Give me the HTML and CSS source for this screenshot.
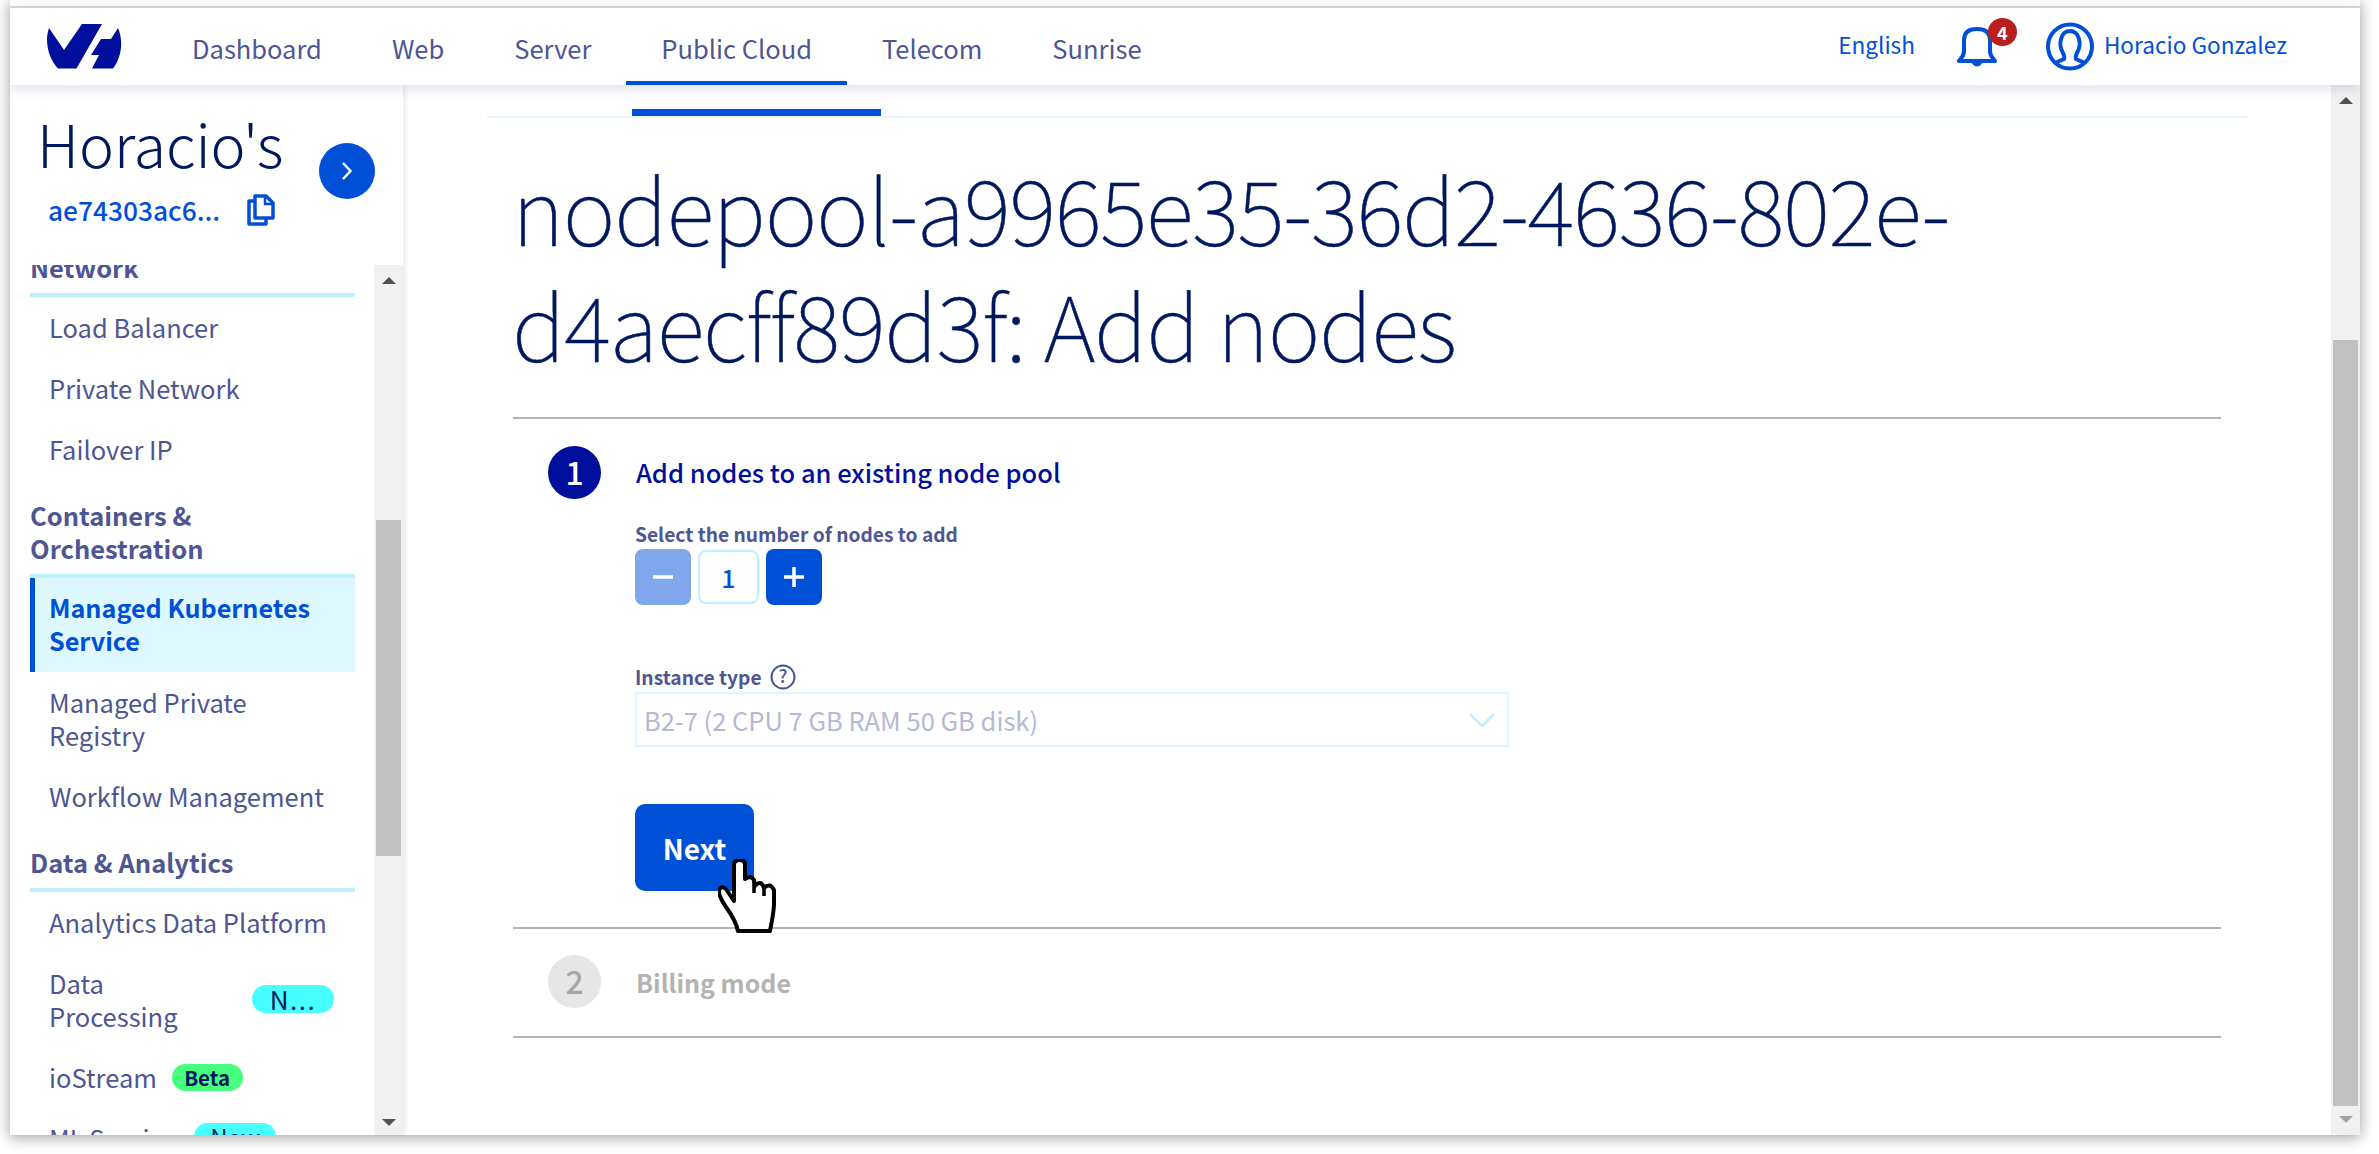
FILE: index.html
```html
<!DOCTYPE html>
<html lang="en">
<head>
    <meta charset="UTF-8">
    <meta name="viewport" content="width=device-width, initial-scale=1.0">
    <link rel="stylesheet" href="styles.css">
    <title>Add nodes</title>
</head>
<body>

<div id="window">
    <div class="top-strip"></div>

    <header class="topbar">
        <svg class="logo" viewBox="0 0 76 45">
            <path d="M3 4C-2 18 3 35 12 44.500L30.500 44.500L56 0L36 0L18 26Z"/>
            <path d="M72 4C78 18 75 34 67 44.500L46 44.500L53 31L45 31L55 15L65 15Z"/>
        </svg>
        <nav class="nav">
            <a class="nav-link">Dashboard</a>
            <a class="nav-link">Web</a>
            <a class="nav-link">Server</a>
            <a class="nav-link active">Public Cloud</a>
            <a class="nav-link">Telecom</a>
            <a class="nav-link">Sunrise</a>
        </nav>
        <div class="topbar-right">
            <span class="lang">English</span>
            <span class="bell">
                <svg viewBox="0 0 40 41" width="40" height="41">
                    <path d="M2 35H38L35 31Q33 29 33 24V14Q33 3 20 3Q7 3 7 14V24Q7 29 5 31Z" fill="none" stroke="#0050d7" stroke-width="4" stroke-linejoin="round"/>
                    <path d="M14 36Q20 45 26 36Z" fill="#0050d7"/>
                </svg>
                <span class="bell-count">4</span>
            </span>
            <svg class="user-icon" viewBox="0 0 48 49" width="48" height="49">
                <circle cx="24" cy="24.500" r="22" fill="none" stroke="#0050d7" stroke-width="4"/>
                <path d="M9 41L18 37Q19 35 17 31Q13 24 15 17Q17 9 24 9Q31 9 33 17Q35 24 31 31Q29 35 30 37L39 41" fill="none" stroke="#0050d7" stroke-width="4"/>
            </svg>
            <span class="user-name">Horacio Gonzalez</span>
        </div>
    </header>

    <div class="body-row">
        <aside class="sidebar">
            <div class="sidebar-head">
                <div>
                    <div class="project-name">Horacio's</div>
                    <div class="project-id">
                        <span>ae74303ac6...</span>
                        <svg viewBox="0 0 29 32" width="29" height="32">
                            <path d="M9 2H20L27 9V24H9Z" fill="none" stroke="#0050d7" stroke-width="3.500" stroke-linejoin="round"/>
                            <path d="M19 3V10H26" fill="none" stroke="#0050d7" stroke-width="2.500"/>
                            <path d="M9 7H3V30H20V24" fill="none" stroke="#0050d7" stroke-width="3.500" stroke-linejoin="round"/>
                        </svg>
                    </div>
                </div>
                <div class="collapse-btn">
                    <svg viewBox="0 0 12 20" width="12" height="20">
                        <path d="M2 2L9.500 10L2 18" fill="none" stroke="#fff" stroke-width="2.500"/>
                    </svg>
                </div>
            </div>

            <div class="sidebar-body">
                <div class="menu-clip">
                    <div class="menu">
                        <div class="menu-group">Network</div>
                        <a class="menu-item">Load Balancer</a>
                        <a class="menu-item">Private Network</a>
                        <a class="menu-item">Failover IP</a>

                        <div class="menu-group">Containers &amp; Orchestration</div>
                        <a class="menu-item selected">Managed Kubernetes Service</a>
                        <a class="menu-item">Managed Private Registry</a>
                        <a class="menu-item">Workflow Management</a>

                        <div class="menu-group">Data &amp; Analytics</div>
                        <a class="menu-item">Analytics Data Platform</a>
                        <a class="menu-item item-badge">
                            <span class="item-label">Data Processing</span>
                            <span class="badge badge-new badge-cut">N...</span>
                        </a>
                        <a class="menu-item item-inline">ioStream <span class="badge badge-beta">Beta</span></a>
                        <a class="menu-item item-inline">ML Serving <span class="badge badge-new badge-ml">New</span></a>
                    </div>
                </div>
                <div class="scrollbar side-scroll">
                    <div class="arrow-up"></div>
                    <div class="thumb"></div>
                    <div class="arrow-down"></div>
                </div>
            </div>
        </aside>

        <main class="main">
            <div class="tabs-line"><div class="tab-mark"></div></div>

            <h1 class="title">nodepool-a9965e35-36d2-4636-802e-<br>d4aecff89d3f: Add nodes</h1>

            <section class="step step-one">
                <div class="step-head">
                    <div class="step-num">1</div>
                    <div class="step-title">Add nodes to an existing node pool</div>
                </div>
                <div class="step-body">
                    <label class="field-label">Select the number of nodes to add</label>
                    <div class="stepper">
                        <div class="step-btn disabled">
                            <svg viewBox="0 0 20 20" width="20" height="20"><path d="M0 10H20" stroke="#fff" stroke-width="3.500"/></svg>
                        </div>
                        <div class="step-value">1</div>
                        <div class="step-btn">
                            <svg viewBox="0 0 20 20" width="20" height="20"><path d="M0 10H20M10 0V20" stroke="#fff" stroke-width="3.500"/></svg>
                        </div>
                    </div>

                    <label class="field-label instance-label">
                        Instance type
                        <svg viewBox="0 0 26 26" width="26" height="26">
                            <circle cx="13" cy="13" r="11.500" fill="none" stroke="#4d5693" stroke-width="2"/>
                            <text x="13" y="19" text-anchor="middle" class="help-mark">?</text>
                        </svg>
                    </label>
                    <div class="select-box">
                        <span>B2-7 (2 CPU 7 GB RAM 50 GB disk)</span>
                        <svg viewBox="0 0 28 16" width="28" height="16">
                            <path d="M2 2L14 14L26 2" fill="none" stroke="#bef1ff" stroke-width="2.500"/>
                        </svg>
                    </div>

                    <button class="next-btn">Next</button>
                </div>
            </section>

            <section class="step step-two">
                <div class="step-head">
                    <div class="step-num">2</div>
                    <div class="step-title">Billing mode</div>
                </div>
            </section>

            <svg class="hand" viewBox="0 0 58 74" width="58" height="74">
                <path d="M16 36V6Q16 1 21.500 1Q27 1 27 6V20Q33 16 36 21L37 27Q43 20 46 29Q52 23 56 31V45Q56 52 52 72H20Q18 62 8 48Q0 36 1 31Q3 26 8 30L16 42Z" fill="#fff" stroke="#000" stroke-width="4" stroke-linejoin="round"/>
                <path d="M36 21V34M46 29V37" fill="none" stroke="#000" stroke-width="3.500"/>
            </svg>
        </main>

        <div class="scrollbar page-scroll">
            <div class="arrow-up"></div>
            <div class="thumb"></div>
            <div class="arrow-down light"></div>
        </div>
    </div>
</div>

</body>
</html>
```

FILE: styles.css
```css
* {
    box-sizing: border-box;
}

body {
    margin: 0;
    height: 1154px;
    overflow: hidden;
    background-color: #fff;
    font-family: "Noto Sans CJK JP", "Noto Sans", sans-serif;
    color: #4d5693;
}

#window {
    display: flex;
    flex-direction: column;
    width: 2350px;
    height: 1135px;
    margin-left: 10px;
    background-color: #fff;
    box-shadow: 0 2px 14px rgba(0, 0, 0, 0.4);
    overflow: hidden;
}

.top-strip {
    flex: none;
    height: 8px;
    border-bottom: 2px solid #dcdce2;
}

/* top bar */
.topbar {
    position: relative;
    z-index: 2;
    flex: none;
    display: flex;
    align-items: stretch;
    height: 77px;
    background-color: #fff;
    box-shadow: 0 2px 12px rgba(40, 40, 110, 0.18);
}

.logo {
    flex: none;
    width: 76px;
    height: 45px;
    margin: 16px 0 0 36px;
    fill: #000e9c;
}

.nav {
    display: flex;
    margin-left: 35px;
}

.nav-link {
    display: flex;
    align-items: center;
    padding: 5px 35px 0;
    font-size: 25.500px;
    border-bottom: 4px solid transparent;
}

.nav-link.active {
    border-bottom-color: #0050d7;
}

.topbar-right {
    display: flex;
    align-items: center;
    margin-left: auto;
    padding-right: 73px;
    color: #0050d7;
    font-size: 22.600px;
}

.lang {
    margin: 0 42px 5px 0;
}

.bell {
    position: relative;
    display: flex;
    margin-right: 49px;
}

.bell-count {
    position: absolute;
    top: -8px;
    left: 31px;
    width: 29px;
    height: 28px;
    border-radius: 50%;
    background-color: #bb1e1e;
    color: #fff;
    font-size: 18px;
    font-weight: 700;
    line-height: 28px;
    text-align: center;
}

.user-name {
    margin: 0 0 5px 10px;
}

/* sidebar */
.body-row {
    flex: 1;
    display: flex;
    min-height: 0;
}

.sidebar {
    position: relative;
    z-index: 1;
    flex: none;
    display: flex;
    flex-direction: column;
    width: 393px;
    background-color: #fff;
    box-shadow: 1px 0 6px rgba(40, 40, 110, 0.15);
}

.sidebar-head {
    flex: none;
    display: flex;
    align-items: flex-start;
    justify-content: space-between;
    height: 180px;
    padding: 22px 28px 0 27px;
}

.project-name {
    margin-bottom: 13px;
    color: #00185e;
    font-size: 59px;
    font-weight: 300;
    line-height: 72px;
}

.project-id {
    display: flex;
    align-items: center;
    gap: 26px;
    padding-left: 11px;
    color: #0050d7;
    font-size: 26.300px;
    font-weight: 500;
    line-height: 36px;
}

.collapse-btn {
    display: flex;
    align-items: center;
    justify-content: center;
    width: 56px;
    height: 56px;
    margin-top: 36px;
    border-radius: 50%;
    background-color: #0050d7;
}

.sidebar-body {
    flex: 1;
    display: flex;
    min-height: 0;
}

.menu-clip {
    flex: 1;
    overflow: hidden;
    padding: 0 19px 0 20px;
}

.menu {
    margin-top: -15px;
    font-size: 25.500px;
    line-height: 33px;
}

.menu-group {
    margin-top: 18px;
    padding-bottom: 10px;
    border-bottom: 4px solid #bef1ff;
    font-weight: 700;
}

.menu-group:first-child {
    margin-top: 0;
}

.menu-item {
    display: block;
    padding: 13px 10px 15px 19px;
}

.menu-item.selected {
    padding-left: 14px;
    border-left: 5px solid #0050d7;
    background-color: #def8ff;
    color: #0050d7;
    font-size: 25.200px;
    font-weight: 700;
}

.item-badge {
    display: flex;
    align-items: center;
    padding-right: 21px;
}

.item-label {
    flex: none;
    width: 152px;
}

.badge {
    display: inline-block;
    height: 27px;
    border-radius: 14px;
    color: #00185e;
    text-align: center;
    vertical-align: 2px;
}

.badge-new {
    background-color: #47ffff;
    font-size: 24px;
    line-height: 28px;
}

.badge-cut {
    width: 82px;
    height: 28px;
    margin-left: auto;
    font-size: 26px;
    letter-spacing: 1.500px;
}

.badge-ml {
    width: 82px;
    margin-left: 9px;
}

.badge-beta {
    width: 71px;
    margin-left: 9px;
    background-color: #47ff7f;
    font-size: 20.500px;
    font-weight: 700;
    line-height: 27px;
}

/* scrollbars */
.scrollbar {
    flex: none;
    display: flex;
    flex-direction: column;
    align-items: center;
    width: 29px;
    background-color: #f1f1f1;
}

.arrow-up,
.arrow-down {
    flex: none;
    width: 0;
    height: 0;
    border-left: 7px solid transparent;
    border-right: 7px solid transparent;
}

.arrow-up {
    border-bottom: 7px solid #505050;
}

.arrow-down {
    margin-top: auto;
    border-top: 7px solid #505050;
}

.arrow-down.light {
    border-top-color: #a3a3a3;
}

.thumb {
    flex: none;
    width: 25px;
    background-color: #c1c1c1;
}

.side-scroll {
    padding: 12px 0 9px;
}

.side-scroll .thumb {
    height: 336px;
    margin-top: 236px;
}

.page-scroll {
    padding: 12px 0 12px;
}

.page-scroll .thumb {
    height: 766px;
    margin-top: 236px;
}

/* main column */
.main {
    position: relative;
    flex: 1;
    min-width: 0;
}

.tabs-line {
    display: flex;
    align-items: flex-end;
    height: 33px;
    margin: 0 84px;
    border-bottom: 2px solid #e6f5fc;
}

.tab-mark {
    width: 249px;
    height: 7px;
    margin-left: 145px;
    background-color: #0050d7;
}

.title {
    margin: 31px 0 36px 109px;
    color: #00185e;
    -webkit-text-stroke: 0.500px #00185e;
    font-size: 90px;
    font-weight: 150;
    letter-spacing: -1.350px;
    line-height: 116px;
}

.step {
    margin: 0 110px;
    border-top: 2px solid #b3b3b3;
}

.step-one {
    padding: 27px 0 36px;
}

.step-one .step-title {
    padding-bottom: 2px;
}

.step-two {
    padding: 26px 0 28px;
    border-bottom: 2px solid #b3b3b3;
}

.step-head {
    display: flex;
    align-items: center;
    gap: 35px;
    padding-left: 35px;
}

.step-num {
    width: 53px;
    height: 53px;
    border-radius: 50%;
    background-color: #000e9c;
    color: #fff;
    font-size: 32px;
    font-weight: 500;
    line-height: 50px;
    text-align: center;
}

.step-title {
    color: #000e9c;
    font-size: 25.500px;
    font-weight: 500;
}

.step-two .step-num {
    background-color: #e6e6e6;
    color: #a6a6a6;
}

.step-two .step-title {
    color: #b3b3b3;
    font-size: 25px;
    font-weight: 700;
}

.step-body {
    display: flex;
    flex-direction: column;
    align-items: flex-start;
    padding: 22px 0 0 122px;
}

.field-label {
    display: flex;
    align-items: center;
    gap: 8px;
    height: 26px;
    margin-bottom: 2px;
    font-size: 19.200px;
    font-weight: 700;
}

.help-mark {
    fill: #4d5693;
    font-size: 18px;
    font-weight: 500;
}

.stepper {
    display: flex;
    gap: 7px;
    height: 56px;
}

.step-btn {
    display: flex;
    align-items: center;
    justify-content: center;
    width: 56px;
    border-radius: 8px;
    background-color: #0050d7;
}

.step-btn.disabled {
    background-color: #80a7eb;
}

.step-value {
    width: 61px;
    margin: 1px 0;
    border: 2px solid #bef1ff;
    border-radius: 8px;
    color: #0050d7;
    font-size: 25px;
    font-weight: 500;
    line-height: 50px;
    text-align: center;
}

.instance-label {
    margin-top: 59px;
}

.select-box {
    display: flex;
    align-items: center;
    justify-content: space-between;
    width: 874px;
    height: 55px;
    padding: 0 11px 0 7px;
    border: 2px solid #def8ff;
    color: #b3b9d5;
    font-size: 25.500px;
}

.next-btn {
    width: 119px;
    height: 87px;
    margin-top: 57px;
    border: none;
    border-radius: 10px;
    background-color: #0050d7;
    color: #fff;
    font-family: inherit;
    font-size: 28px;
    font-weight: 700;
}

.hand {
    position: absolute;
    top: 774px;
    left: 315px;
}
```
